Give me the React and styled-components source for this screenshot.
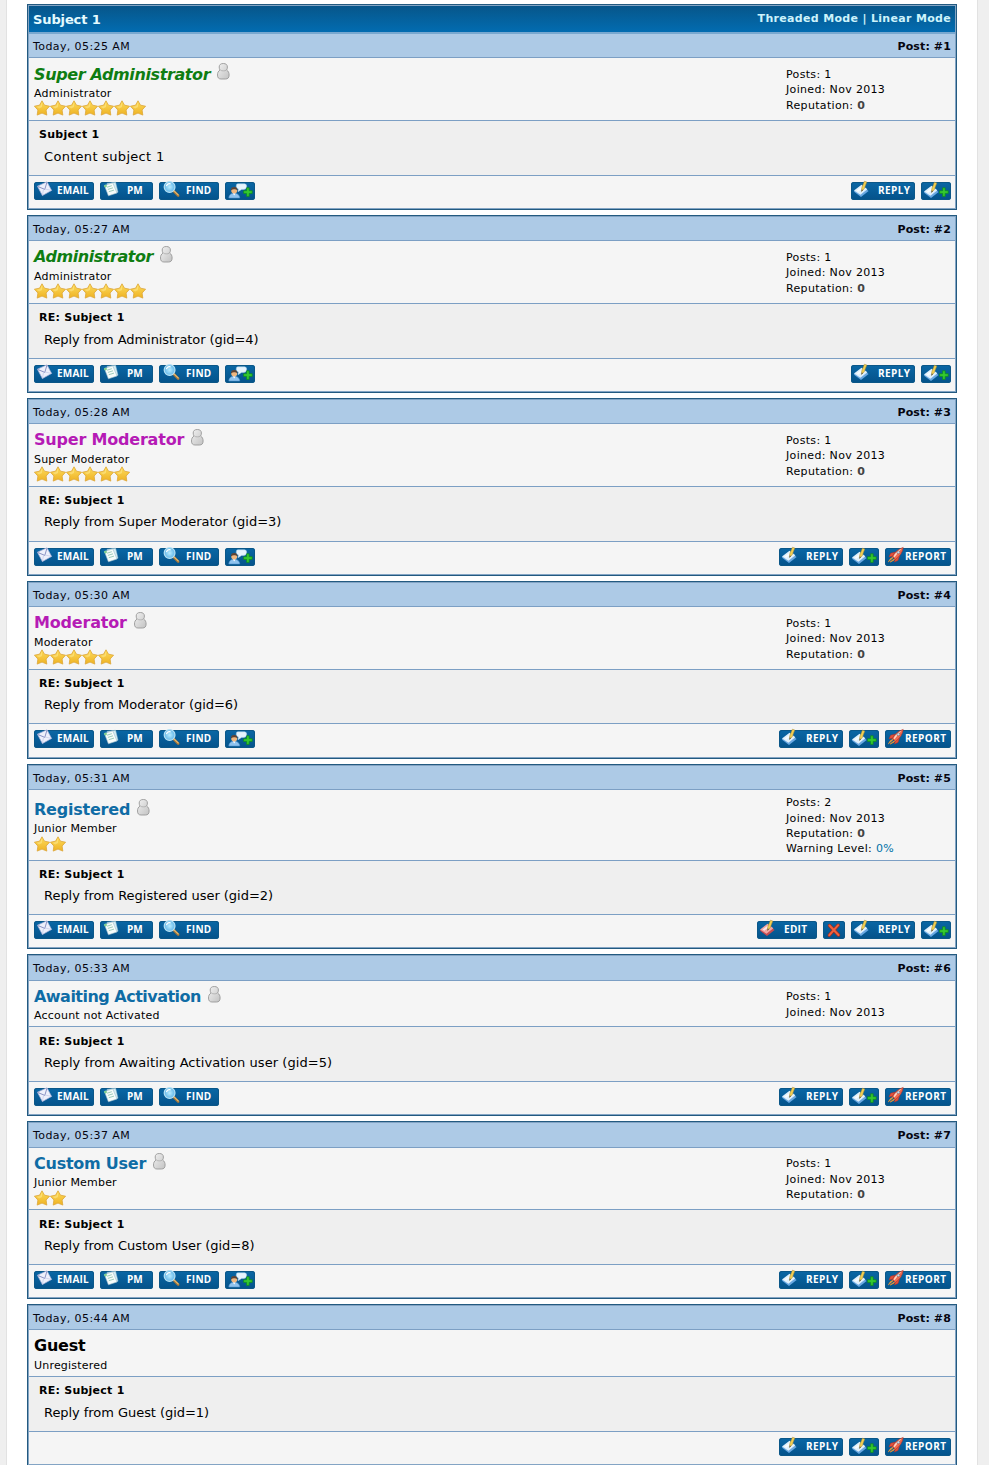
import React from 'react';
import styled, { createGlobalStyle } from 'styled-components';

const GlobalStyle = createGlobalStyle`
  body {
    margin: 0;
    background: #efefef;
    color: #000;
    font-family: Verdana, 'DejaVu Sans', sans-serif;
    font-size: 11px;
  }
`;

const Container = styled.div`
  box-sizing: border-box;
  width: 972px;
  height: 1465px;
  margin-left: 6px;
  padding: 4px 20px 0;
  overflow: hidden;
  background: #fff;
  border-left: 1px solid #e2e2e2;
  border-right: 1px solid #e2e2e2;
`;

const Table = styled.div`
  width: 926px;
  margin-bottom: 5px;
  border: 1px solid #235a80;
  outline: 1px solid #83a4c4;
  outline-offset: -2px;
  padding: 1px;
`;

const TitleBar = styled.div`
  display: flex;
  justify-content: space-between;
  box-sizing: border-box;
  height: 28px;
  padding: 0 4px;
  border-bottom: 2px solid #78a8d0;
  background: linear-gradient(#07568a, #026cb1);
  color: #e4fbff;
  font-weight: bold;
`;

const Title = styled.span`
  font-size: 13px;
  line-height: 27px;
  letter-spacing: -0.12px;
`;

const Modes = styled.span`
  line-height: 26px;
  color: #cdf3fb;
  letter-spacing: 0.32px;
`;

const DateBar = styled.div`
  display: flex;
  justify-content: space-between;
  box-sizing: border-box;
  height: ${(p) => p.$height}px;
  padding: 0 4px;
  border-bottom: 1px solid #7c9fc4;
  background: #adcae6;
  line-height: 26px;
  letter-spacing: 0.4px;
  color: #050510;
`;

const PostNumber = styled.strong`
  font-weight: bold;
  letter-spacing: 0.12px;
`;

const AuthorRow = styled.div`
  display: flex;
  align-items: center;
  box-sizing: border-box;
  height: ${(p) => p.$height}px;
  border-bottom: 1px solid #7c9fc4;
  background: #f5f5f5;
`;

const Author = styled.div`
  align-self: flex-start;
  box-sizing: border-box;
  width: 757px;
  padding: ${(p) => p.$top}px 0 0 5px;
`;

const NameLine = styled.div`
  display: flex;
  height: 22px;
`;

const Name = styled.strong`
  font-size: 16px;
  line-height: ${(p) => p.$line || 22}px;
  white-space: nowrap;
  color: ${(p) => p.$color};
  font-style: ${(p) => (p.$italic ? 'italic' : 'normal')};
  letter-spacing: ${(p) => p.$spacing}px;
  margin-right: 7px;
`;

const Group = styled.div`
  height: 14px;
  line-height: ${(p) => p.$line || 18}px;
  letter-spacing: 0.2px;
`;

const Stars = styled.div`
  display: flex;
  height: 16px;
  margin-top: 1px;
`;

const Stats = styled.div`
  padding-top: 2px;
  line-height: 15.4px;
  letter-spacing: 0.33px;

  b {
    color: #444;
  }

  a {
    color: #0072a8;
  }
`;

const Body = styled.div`
  box-sizing: border-box;
  height: ${(p) => p.$height}px;
  padding: 6px 10px 0;
  border-bottom: 1px solid #7c9fc4;
  background: #efefef;
`;

const Subject = styled.div`
  height: 16px;
  line-height: ${(p) => p.$line || 16}px;
  font-weight: bold;
  letter-spacing: 0.25px;
`;

const Content = styled.div`
  margin-top: ${(p) => p.$gap}px;
  padding-left: 5px;
  font-size: 13px;
  line-height: 18px;
  letter-spacing: ${(p) => p.$spacing || 0}px;
`;

const Footer = styled.div`
  display: flex;
  justify-content: space-between;
  align-items: flex-start;
  box-sizing: border-box;
  height: ${(p) => p.$height}px;
  padding: 6px 4px 0 5px;
  background: #f5f5f5;
`;

const Buttons = styled.div`
  display: flex;
  gap: 6px;
`;

const Button = styled.button`
  display: flex;
  box-sizing: border-box;
  width: ${(p) => p.$width}px;
  height: 18px;
  padding: 0;
  border: 0;
  border-radius: 3px;
  background: linear-gradient(#0a67a5, #04528a);
  box-shadow: inset 0 0 0 1px #0b5788;
  color: #fff;
  font-family: 'Open Sans', sans-serif;
  font-size: 10px;
  font-weight: 700;
  line-height: 17px;

  svg {
    flex: none;
    overflow: visible;
  }
`;

const Label = styled.span`
  margin-left: ${(p) => p.$offset}px;
  letter-spacing: ${(p) => p.$spacing || 0}px;
`;

const Star = () => (
  <svg width="16" height="16" viewBox="0 0 16 16">
    <path
      d="M8 0.8 L10.5 5.2 L15.6 6.2 L12.1 10 L12.8 15.1 L8 13.1 L3.2 15.1 L3.9 10 L0.4 6.2 L5.5 5.2 Z"
      fill="url(#gold)"
      stroke="#dda636"
      strokeWidth="0.8"
      strokeLinejoin="round"
    />
    <path d="M8 2.4 L6.3 6 L2.4 6.8 L5.2 8.6 L8 7 Z" fill="#fff0a0" opacity="0.45" />
  </svg>
);

const BuddyOffline = () => (
  <svg width="13" height="17" viewBox="0 0 13 17">
    <path
      d="M6.3 0.5 C3.6 0.5 2.2 1.8 2.2 4 C2.2 5.4 2.5 6.2 3 7 C1.2 8.2 0.5 9.8 0.5 12 C0.5 14.8 1.8 16 4 16 H8.6 C10.8 16 12.1 14.8 12.1 12 C12.1 9.8 11.4 8.2 9.6 7 C10.1 6.2 10.4 5.4 10.4 4 C10.4 1.8 9 0.5 6.3 0.5 Z"
      fill="url(#grey)"
      stroke="#989898"
      strokeWidth="0.9"
    />
    <path d="M3.4 7.2 C5 8.1 7.6 8.1 9.2 7.2" fill="none" stroke="#aaa" strokeWidth="0.8" />
  </svg>
);

const Plus = ({ x, y }) => (
  <path
    transform={`translate(${x} ${y})`}
    d="M3 0 H5.6 V2.9 H8.6 V5.6 H5.6 V8.6 H3 V5.6 H0 V2.9 H3 Z"
    fill="#35c92f"
    stroke="#0c8a1c"
    strokeWidth="0.7"
  />
);

const Sheet = ({ light, dark }) => (
  <g>
    <path d="M2.8 9.6 L10.5 3.6 L17.6 9 L10 15 Z" fill={dark} />
    <path d="M3 8.4 L10.5 2.8 L16.4 7.2 L9.4 12.8 Z" fill={light} />
    <path d="M5.5 8.6 L10.5 4.8 L12.2 6 L7.3 9.8 Z" fill="#fff" opacity="0.75" />
    <path d="M13.4 -0.8 L15.8 0 L13.2 6.8 L10.6 9.4 L10.7 6 Z" fill="#f1cf52" stroke="#a58732" strokeWidth="0.5" />
    <path d="M10.7 7.4 L12 8 L10.4 9.7 Z" fill="#444" />
  </g>
);

const icons = {
  email: (
    <g>
      <path d="M3.4 4.2 L13 -0.2 L17.6 8.4 L8.4 13.6 Z" fill="#eef0fb" stroke="#a9b0da" strokeWidth="0.7" />
      <path d="M3.6 4.4 L10.8 7.4 L13 0" fill="none" stroke="#8c93c4" strokeWidth="1" />
      <path d="M8.4 13.4 L9.6 7 M17.4 8.4 L11 7" fill="none" stroke="#c3c8e6" strokeWidth="0.7" />
    </g>
  ),
  pm: (
    <g>
      <path d="M7 1.4 L15.6 0.2 L18 10.2 L9.4 12.4 Z" fill="#d5ecf2" stroke="#9cc4d6" strokeWidth="0.5" />
      <path d="M4.4 3.4 L12.8 0.9 L17 11 L8.4 13.8 Z" fill="#f7fcfa" stroke="#a2bfcc" strokeWidth="0.6" />
      <path d="M7 5.2 L11.8 3.7 M7.9 7.4 L13 5.8 M8.8 9.7 L14 8.1" stroke="#93c6b4" strokeWidth="0.9" />
      <circle cx="5.5" cy="4.1" r="1.4" fill="#7fcf8d" />
    </g>
  ),
  find: (
    <g>
      <path d="M14.8 9.2 L19.2 13.6" stroke="#a87838" strokeWidth="2.6" strokeLinecap="round" />
      <path d="M15 8.9 L19.2 12.9" stroke="#e5bd78" strokeWidth="1.1" strokeLinecap="round" />
      <circle cx="10.6" cy="5" r="5.4" fill="url(#lens)" stroke="#b7e2f5" strokeWidth="1.2" />
      <path d="M7.4 4.2 C8 2.2 10 1.4 11.6 1.8" fill="none" stroke="#fff" strokeWidth="1.2" />
    </g>
  ),
  buddy: (
    <g>
      <path d="M12.8 1.8 H19.4 Q21.8 1.8 21.6 4.6 Q21.6 7.4 18.6 7.4 H16.6 L13 9.8 L13.4 7 Q11.2 6.4 11.2 4.2 Q11.3 1.8 12.8 1.8 Z" fill="#e6f4fd" stroke="#acd0e6" strokeWidth="0.5" />
      <path d="M3.8 16 Q4 11.6 9 11 Q14.4 11.4 14.8 16 Z" fill="#8fc3ee" stroke="#4e91cc" strokeWidth="0.6" />
      <path d="M7.8 11.2 L9.2 13.6 L10.6 11.2 Z" fill="#fff" />
      <circle cx="9.2" cy="8.6" r="3" fill="#efb881" />
      <path d="M6 8.4 Q5.7 5 9.2 5 Q12.6 5 12.4 8.4 Q11 7 9.2 7.2 Q7.6 7.1 6 8.4 Z" fill="#5b4336" />
      <Plus x={18.6} y={5.8} />
    </g>
  ),
  reply: <Sheet light="#dff0fc" dark="#69a8e2" />,
  quote: (
    <g>
      <g transform="translate(0 1)">
        <Sheet light="#dff0fc" dark="#69a8e2" />
      </g>
      <Plus x={18.6} y={5.8} />
    </g>
  ),
  edit: <Sheet light="#f3a5a3" dark="#c54b50" />,
  remove: (
    <g strokeLinecap="round">
      <path d="M6.5 4.5 L15.5 14 M15.2 4.2 L6.3 14.2" stroke="#9f2c22" strokeWidth="3.4" />
      <path d="M6.5 4.5 L15.5 14 M15.2 4.2 L6.3 14.2" stroke="#f0633f" strokeWidth="2" />
    </g>
  ),
  report: (
    <g>
      <path d="M8.5 9.2 L3.4 13.8 L5.6 10.4 Z M10 10.4 L5.2 14 L8.8 12.2 Z" fill="#ffc44f" stroke="#eb8f2e" strokeWidth="0.8" />
      <path d="M10 4.2 L5.6 5.2 L4 9 L8 8 Z M14.5 8 L13 12.4 L9.4 14 L10.6 10.6 Z" fill="#e2513a" stroke="#b92d22" strokeWidth="0.5" />
      <path d="M7.4 8.4 Q10.6 1.8 18.2 -0.6 Q17.2 6.8 10.4 11.4 Z" fill="#ef6b50" stroke="#b5362a" strokeWidth="0.6" />
      <path d="M8.6 8.2 Q11.6 3 16.4 0.8 Q13 4.6 9.6 9.2 Z" fill="#ffd6c4" />
      <circle cx="13.4" cy="4.3" r="1.5" fill="#b7dcf2" stroke="#8a3a30" strokeWidth="0.5" />
    </g>
  ),
};

const buttonTypes = {
  email: { width: 60, label: 'EMAIL', offset: 3, spacing: 0.2 },
  pm: { width: 53, label: 'PM', offset: 7 },
  find: { width: 60, label: 'FIND', offset: 7, spacing: 0.3 },
  buddy: { width: 30 },
  reply: { width: 64, label: 'REPLY', offset: 7, spacing: 0.4 },
  quote: { width: 30 },
  edit: { width: 60, label: 'EDIT', offset: 7, spacing: 0.3 },
  remove: { width: 22 },
  report: { width: 66, label: 'REPORT', offset: 0, spacing: 0.45 },
};

const PostButton = ({ type }) => {
  const { width, label, offset, spacing } = buttonTypes[type];
  return (
    <Button $width={width} aria-label={label || type}>
      <svg width="20" height="18" viewBox="0 0 20 18">
        {icons[type]}
      </svg>
      {label && <Label $offset={offset} $spacing={spacing}>{label}</Label>}
    </Button>
  );
};

const GREEN = '#0f7d12';
const PURPLE = '#b51bb5';
const BLUE = '#0f6ca5';

const own = ['email', 'pm', 'find'];
const ownBuddy = ['email', 'pm', 'find', 'buddy'];
const moderated = ['reply', 'quote', 'report'];

// rows: heights of the date bar, author, message and footer
const posts = [
  { time: '05:25', name: 'Super Administrator', color: GREEN, italic: true, spacing: -0.38, nameLine: 24, group: 'Administrator', stars: 7, count: 1, rep: true, text: 'Content subject 1', textSpacing: 0.3, left: ownBuddy, right: ['reply', 'quote'], rows: [24, 63, 55, 32], top: 5 },
  { time: '05:27', name: 'Administrator', color: GREEN, italic: true, spacing: -0.45, group: 'Administrator', stars: 7, count: 1, rep: true, text: 'Reply from Administrator (gid=4)', textSpacing: -0.07, left: ownBuddy, right: ['reply', 'quote'], rows: [24, 63, 55, 32], top: 5 },
  { time: '05:28', name: 'Super Moderator', color: PURPLE, spacing: -0.2, group: 'Super Moderator', stars: 6, count: 1, rep: true, text: 'Reply from Super Moderator (gid=3)', left: ownBuddy, right: moderated, rows: [24, 63, 55, 32], top: 5, gap: 4 },
  { time: '05:30', name: 'Moderator', color: PURPLE, spacing: -0.18, group: 'Moderator', stars: 5, count: 1, rep: true, text: 'Reply from Moderator (gid=6)', textSpacing: -0.04, left: ownBuddy, right: moderated, rows: [24, 63, 54, 33], top: 5, gap: 4 },
  { time: '05:31', name: 'Registered', color: BLUE, spacing: -0.22, group: 'Junior Member', groupLine: 16, stars: 2, count: 2, rep: true, warning: '0%', text: 'Reply from Registered user (gid=2)', textSpacing: -0.03, left: own, right: ['edit', 'remove', 'reply', 'quote'], rows: [24, 71, 54, 32], top: 9, gap: 4 },
  { time: '05:33', name: 'Awaiting Activation', color: BLUE, spacing: -0.52, group: 'Account not Activated', groupLine: 16, stars: 0, count: 1, text: 'Reply from Awaiting Activation user (gid=5)', textSpacing: 0.06, subjectLine: 18, left: own, right: moderated, rows: [25, 46, 55, 32], top: 5 },
  { time: '05:37', name: 'Custom User', color: BLUE, spacing: -0.25, group: 'Junior Member', groupLine: 16, stars: 2, count: 1, rep: true, text: 'Reply from Custom User (gid=8)', textSpacing: -0.04, subjectLine: 18, left: ownBuddy, right: moderated, rows: [25, 62, 55, 32], top: 5 },
  { time: '05:44', name: 'Guest', color: '#000', spacing: -0.2, group: 'Unregistered', stars: 0, guest: true, text: 'Reply from Guest (gid=1)', textSpacing: -0.05, left: [], right: moderated, rows: [24, 47, 55, 32], top: 5 },
];

const Post = ({ post, number }) => (
  <Table>
    {number === 1 && (
      <TitleBar>
        <Title>Subject 1</Title>
        <Modes>Threaded Mode | Linear Mode</Modes>
      </TitleBar>
    )}
    <DateBar $height={post.rows[0]}>
      <span>Today, {post.time} AM</span>
      <PostNumber>Post: #{number}</PostNumber>
    </DateBar>
    <AuthorRow $height={post.rows[1]}>
      <Author $top={post.top}>
        <NameLine>
          <Name $color={post.color} $italic={post.italic} $spacing={post.spacing} $line={post.nameLine}>
            {post.name}
          </Name>
          {!post.guest && <BuddyOffline />}
        </NameLine>
        <Group $line={post.groupLine}>{post.group}</Group>
        {post.stars > 0 && (
          <Stars>
            {Array.from({ length: post.stars }, (_, i) => <Star key={i} />)}
          </Stars>
        )}
      </Author>
      {!post.guest && (
        <Stats>
          <div>Posts: {post.count}</div>
          <div>Joined: Nov 2013</div>
          {post.rep && <div>Reputation: <b>0</b></div>}
          {post.warning && <div>Warning Level: <a>{post.warning}</a></div>}
        </Stats>
      )}
    </AuthorRow>
    <Body $height={post.rows[2]}>
      <Subject $line={post.subjectLine}>{number === 1 ? 'Subject 1' : 'RE: Subject 1'}</Subject>
      <Content $gap={post.gap || 5} $spacing={post.textSpacing}>{post.text}</Content>
    </Body>
    <Footer $height={post.rows[3]}>
      <Buttons>{post.left.map((type) => <PostButton key={type} type={type} />)}</Buttons>
      <Buttons>{post.right.map((type) => <PostButton key={type} type={type} />)}</Buttons>
    </Footer>
  </Table>
);

const Gradients = () => (
  <svg width="0" height="0" style={{ display: 'block' }}>
    <defs>
      <linearGradient id="gold" x1="0" y1="0" x2="0" y2="1">
        <stop offset="0" stopColor="#fddc5c" />
        <stop offset="1" stopColor="#eeb224" />
      </linearGradient>
      <linearGradient id="grey" x1="0" y1="0" x2="1" y2="1">
        <stop offset="0" stopColor="#f2f2f2" />
        <stop offset="1" stopColor="#c2c2c2" />
      </linearGradient>
      <radialGradient id="lens">
        <stop offset="0" stopColor="#b9ecff" />
        <stop offset="1" stopColor="#62b6e8" />
      </radialGradient>
    </defs>
  </svg>
);

export default function App() {
  return (
    <>
      <GlobalStyle />
      <Container>
        <Gradients />
        {posts.map((post, i) => (
          <Post key={post.time} post={post} number={i + 1} />
        ))}
      </Container>
    </>
  );
}
